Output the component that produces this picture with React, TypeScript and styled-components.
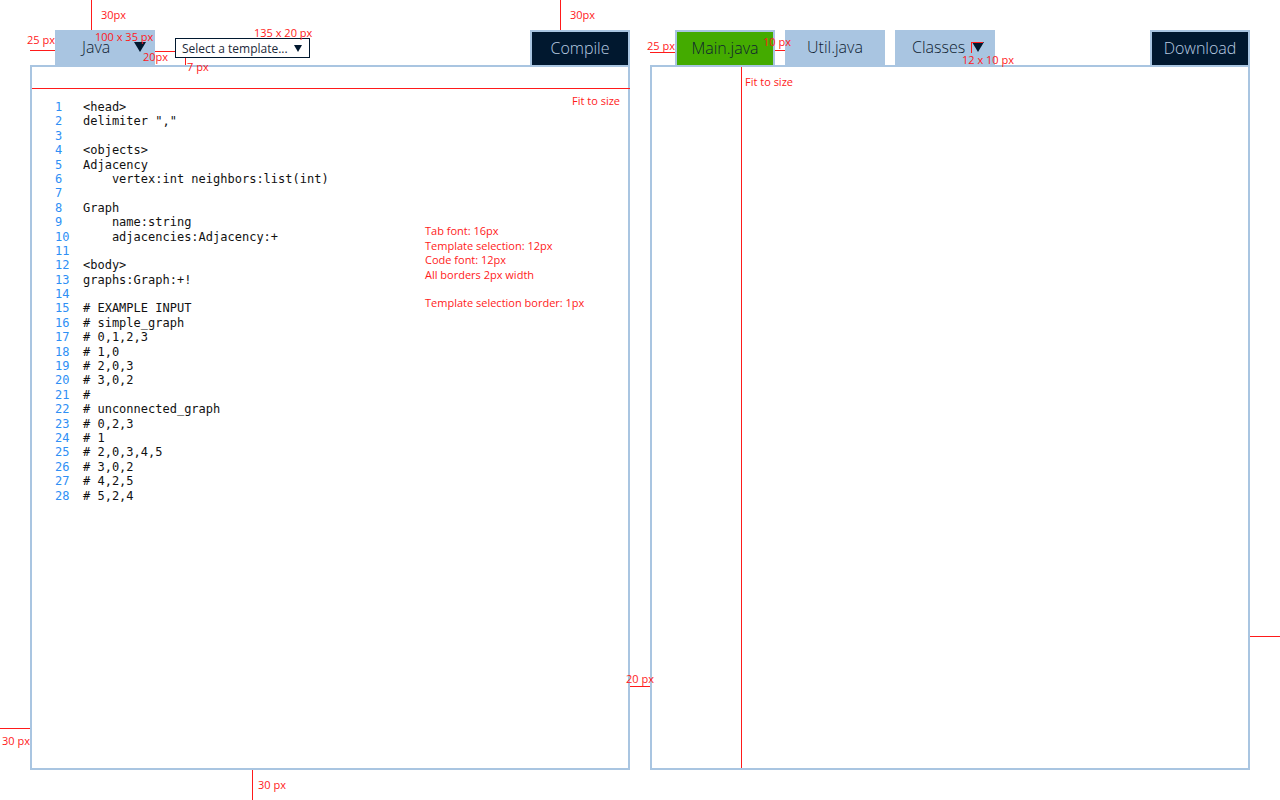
import styled, { createGlobalStyle } from "styled-components";

const GlobalStyle = createGlobalStyle`
  html, body {
    margin: 0;
    padding: 0;
    background: #fff;
  }
  body {
    font-family: "Open Sans", "Noto Sans", sans-serif;
  }
`;

const BLUE = "#a9c5e1";
const NAVY = "#01182f";
const RED = "#ff1a1a";

const Page = styled.div`
  position: relative;
  width: 1280px;
  height: 800px;
  box-sizing: border-box;
  padding: 30px;
  display: grid;
  grid-template-columns: 600px 600px;
  column-gap: 20px;
  overflow: hidden;
`;

const Column = styled.div`
  display: flex;
  flex-direction: column;
  min-height: 0;
`;

const Toolbar = styled.div<{ $gap: number }>`
  height: 35px;
  display: flex;
  align-items: stretch;
  padding-left: 25px;
  gap: ${(p) => p.$gap}px;
`;

const Tab = styled.div<{ $active?: boolean; $padL?: number; $padR?: number }>`
  width: 100px;
  box-sizing: border-box;
  display: flex;
  align-items: center;
  justify-content: ${(p) => (p.$padL !== undefined ? "space-between" : "center")};
  padding: 0 ${(p) => p.$padR ?? 0}px 1px ${(p) => p.$padL ?? 0}px;
  font-size: 16px;
  font-weight: 300;
  color: #0f1d31;
  background: ${(p) => (p.$active ? "#44ab00" : BLUE)};
  border: ${(p) => (p.$active ? `2px solid ${BLUE}` : "none")};
  border-bottom: none;
`;

const ActionButton = styled.div`
  margin-left: auto;
  width: 100px;
  box-sizing: border-box;
  background: ${NAVY};
  border: 2px solid ${BLUE};
  border-bottom: none;
  color: #b9cde2;
  font-size: 16px;
  font-weight: 300;
  display: flex;
  align-items: center;
  justify-content: center;
  padding-bottom: 2px;
`;

const TemplateSelect = styled.div`
  align-self: flex-end;
  margin-bottom: 7px;
  width: 135px;
  height: 20px;
  box-sizing: border-box;
  border: 1px solid ${NAVY};
  background: #fff;
  display: flex;
  align-items: center;
  justify-content: space-between;
  padding: 0 7px 0 6px;
  font-size: 12px;
  color: #1d2a3a;
`;

const Panel = styled.div<{ $row?: boolean }>`
  flex: 1;
  display: flex;
  flex-direction: ${(p) => (p.$row ? "row" : "column")};
  border: 2px solid ${BLUE};
  background: #fff;
  min-height: 0;
`;

const FitStrip = styled.div`
  height: 21px;
  border-bottom: 1px solid ${RED};
  margin-right: -2px;
`;

const EditorBody = styled.div`
  flex: 1;
  display: grid;
  grid-template-columns: 393px 1fr;
  align-items: start;
`;

const Code = styled.div`
  padding: 11px 0 0 23px;
  font-family: "DejaVu Sans Mono", "Liberation Mono", monospace;
  font-size: 12px;
  line-height: 14.4px;
`;

const Line = styled.div`
  display: flex;
  height: 14.4px;
`;

const LineNo = styled.span`
  width: 28px;
  color: #2e8ff5;
`;

const LineText = styled.span`
  color: #111;
  white-space: pre;
`;

const SideNotes = styled.div`
  display: flex;
  flex-direction: column;
  padding-top: 5px;
`;

const Label = styled.div`
  color: ${RED};
  font-family: "Open Sans", "Noto Sans", sans-serif;
  font-size: 11px;
  line-height: 14.4px;
  white-space: pre;
`;

const FitLabel = styled(Label)`
  align-self: flex-end;
  padding-right: 8px;
`;

const SpecList = styled(Label)`
  margin-top: 116px;
`;

const Guide = styled.div`
  width: 89px;
  border-right: 1px solid ${RED};
`;

const GuideLabel = styled(Label)`
  padding: 8px 0 0 3px;
`;

/* dimension marks drawn over the mockup */
const Mark = styled.div<{ $x: number; $y: number; $row?: boolean; $align?: string }>`
  position: absolute;
  left: ${(p) => p.$x}px;
  top: ${(p) => p.$y}px;
  display: flex;
  flex-direction: ${(p) => (p.$row ? "row" : "column")};
  align-items: ${(p) => p.$align ?? "flex-start"};
`;

const HRule = styled.div<{ $w: number; $ml?: number; $mt?: number }>`
  width: ${(p) => p.$w}px;
  height: 1px;
  background: ${RED};
  margin-left: ${(p) => p.$ml ?? 0}px;
  margin-top: ${(p) => p.$mt ?? 0}px;
`;

const VRule = styled.div<{ $h: number; $mr?: number }>`
  width: 1px;
  height: ${(p) => p.$h}px;
  background: ${RED};
  margin-right: ${(p) => p.$mr ?? 0}px;
`;

const Corner = styled.div`
  width: 11px;
  height: 10px;
  margin-left: 9px;
  border-top: 1px solid ${RED};
  border-left: 1px solid ${RED};
`;

const Offset = styled.div<{ $ml?: number; $mt?: number }>`
  margin-left: ${(p) => p.$ml ?? 0}px;
  margin-top: ${(p) => p.$mt ?? 0}px;
`;

const Caret = ({ w, h }: { w: number; h: number }) => (
  <svg width={w} height={h} viewBox={`0 0 ${w} ${h}`} style={{ display: "block" }}>
    <polygon points={`0,0 ${w},0 ${w / 2},${h}`} fill={NAVY} />
  </svg>
);

const codeLines = [
  "<head>",
  'delimiter ","',
  "",
  "<objects>",
  "Adjacency",
  "    vertex:int neighbors:list(int)",
  "",
  "Graph",
  "    name:string",
  "    adjacencies:Adjacency:+",
  "",
  "<body>",
  "graphs:Graph:+!",
  "",
  "# EXAMPLE INPUT",
  "# simple_graph",
  "# 0,1,2,3",
  "# 1,0",
  "# 2,0,3",
  "# 3,0,2",
  "#",
  "# unconnected_graph",
  "# 0,2,3",
  "# 1",
  "# 2,0,3,4,5",
  "# 3,0,2",
  "# 4,2,5",
  "# 5,2,4",
];

const specs =
  "Tab font: 16px\nTemplate selection: 12px\nCode font: 12px\nAll borders 2px width\n\nTemplate selection border: 1px";

const Dimensions = () => (
  <>
    <Mark $x={91} $y={0} $row $align="center">
      <VRule $h={30} $mr={9} />
      <Label>30px</Label>
    </Mark>
    <Mark $x={27} $y={33}>
      <Label>25 px</Label>
      <HRule $w={25} $ml={3} $mt={3} />
    </Mark>
    <Mark $x={95} $y={30}>
      <Label>100 x 35 px</Label>
    </Mark>
    <Mark $x={143} $y={51}>
      <HRule $w={20} $ml={12} />
      <Offset $mt={-2}>
        <Label>20px</Label>
      </Offset>
    </Mark>
    <Mark $x={254} $y={26}>
      <Label>135 x 20 px</Label>
    </Mark>
    <Mark $x={185} $y={58} $row>
      <VRule $h={7} $mr={1} />
      <Offset $mt={2}>
        <Label>7 px</Label>
      </Offset>
    </Mark>
    <Mark $x={560} $y={0} $row $align="center">
      <VRule $h={30} $mr={9} />
      <Label>30px</Label>
    </Mark>

    <Mark $x={647} $y={39}>
      <Label>25 px</Label>
      <HRule $w={25} $ml={3} $mt={-1} />
    </Mark>
    <Mark $x={763} $y={35}>
      <Label>10 px</Label>
      <HRule $w={10} $ml={12} $mt={1} />
    </Mark>
    <Mark $x={962} $y={42}>
      <Corner />
      <Label>12 x 10 px</Label>
    </Mark>

    <Mark $x={626} $y={672}>
      <Label>20 px</Label>
      <HRule $w={20} $ml={4} />
    </Mark>
    <Mark $x={1250} $y={636}>
      <HRule $w={30} />
    </Mark>
    <Mark $x={0} $y={728}>
      <HRule $w={30} />
      <Offset $ml={2} $mt={5}>
        <Label>30 px</Label>
      </Offset>
    </Mark>
    <Mark $x={252} $y={770} $row>
      <VRule $h={30} $mr={5} />
      <Offset $mt={8}>
        <Label>30 px</Label>
      </Offset>
    </Mark>
  </>
);

export default function App() {
  return (
    <>
      <GlobalStyle />
      <Page>
        <Column>
          <Toolbar $gap={20}>
            <Tab $padL={27} $padR={9}>
              <span>Java</span>
              <Caret w={12} h={10} />
            </Tab>
            <TemplateSelect>
              <span>Select a template...</span>
              <Caret w={8} h={7} />
            </TemplateSelect>
            <ActionButton>Compile</ActionButton>
          </Toolbar>
          <Panel>
            <FitStrip />
            <EditorBody>
              <Code>
                {codeLines.map((text, i) => (
                  <Line key={i}>
                    <LineNo>{i + 1}</LineNo>
                    <LineText>{text}</LineText>
                  </Line>
                ))}
              </Code>
              <SideNotes>
                <FitLabel>Fit to size</FitLabel>
                <SpecList>{specs}</SpecList>
              </SideNotes>
            </EditorBody>
          </Panel>
        </Column>
        <Column>
          <Toolbar $gap={10}>
            <Tab $active>
              <span>Main.java</span>
            </Tab>
            <Tab>
              <span>Util.java</span>
            </Tab>
            <Tab $padL={17} $padR={11}>
              <span>Classes</span>
              <Caret w={12} h={10} />
            </Tab>
            <ActionButton>Download</ActionButton>
          </Toolbar>
          <Panel $row>
            <Guide />
            <GuideLabel>Fit to size</GuideLabel>
          </Panel>
        </Column>
        <Dimensions />
      </Page>
    </>
  );
}
